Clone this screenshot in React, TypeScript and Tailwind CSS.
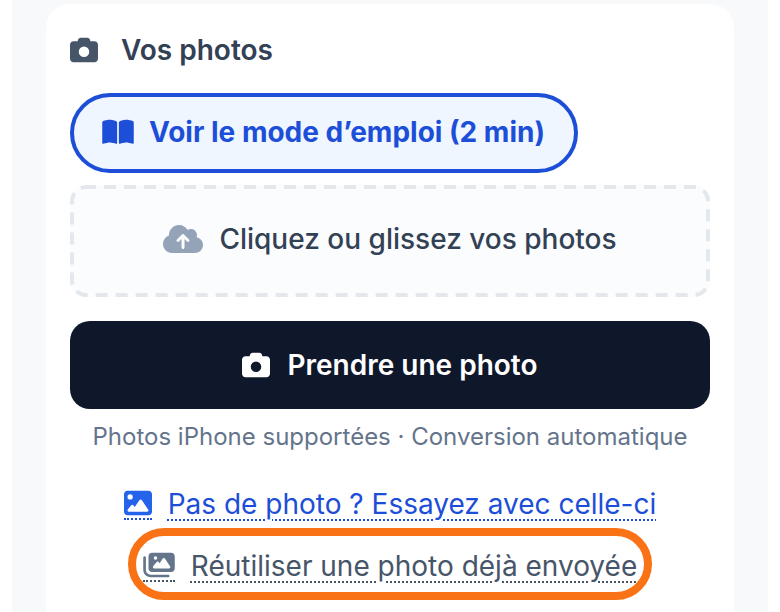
import { FaBookOpen, FaCamera, FaCloudArrowUp, FaImage, FaImages } from 'react-icons/fa6'

export default function App() {
  return (
    <div className="h-[612px] w-[780px] overflow-hidden bg-white font-['Inter',sans-serif]">
      <div className="mx-3 h-full bg-[#f8f9fb] px-[34px] pt-1">
        <div className="h-[640px] rounded-t-[24px] bg-white px-6 pt-[24px]">
          {/* Section title */}
          <div className="flex h-[44px] items-center gap-[24px] text-[#334155]">
            <FaCamera className="h-[28px] w-[28px] text-[#475569]" />
            <h2 className="-ml-px text-[28px] font-semibold leading-none">Vos photos</h2>
          </div>

          <button className="mt-[21px] flex h-[80px] items-center gap-[16px] rounded-full border-4 border-[#1d4ed8] bg-[#eff6ff] pb-[2px] pl-[28px] pr-[29px] text-[28px] font-bold text-[#1d4ed8]">
            <FaBookOpen className="h-[28px] w-[32px] text-[#1d4ed8]" />
            <span className="-ml-px">Voir le mode d’emploi (2 min)</span>
          </button>

          {/* Drop zone, dashes drawn so they keep the reference's 12/8 rhythm */}
          <div className="relative mt-[12px] flex h-[112px] items-center justify-center gap-[16px] rounded-[16px] bg-[#fafcfe] pb-[4px] text-[28px] font-medium text-[#334155]">
            <svg className="absolute inset-0 h-full w-full" viewBox="0 0 640 112" fill="none">
              <rect x="2" y="2" width="636" height="108" rx="14" stroke="#e4e8ec" strokeWidth="4" strokeDasharray="12 8" strokeDashoffset="2" />
            </svg>
            <FaCloudArrowUp className="h-[32px] w-[40px] text-[#94a3b8]" />
            <span>Cliquez ou glissez vos photos</span>
          </div>

          <button className="mt-[24px] flex h-[88px] w-full items-center justify-center gap-[17px] rounded-[20px] bg-[#0f172a] text-[28px] font-semibold text-white">
            <FaCamera className="h-[28px] w-[28px]" />
            <span>Prendre une photo</span>
          </button>

          <p className="mt-[14px] text-center text-[24px] leading-[28px] text-[#64748b]">
            Photos iPhone supportées · Conversion automatique
          </p>

          <div className="mt-[34px] flex flex-col items-center">
            <a className="text-[28px] leading-[38px] text-[#1d4ed8] underline decoration-dotted decoration-2 underline-offset-[5px]">
              <span className="mr-[16px] inline-block border-b-2 border-dotted border-[#1d4ed8] pb-[1px] align-[-6px]">
                <FaImage className="h-[28px] w-[28px] text-[#2563eb]" />
              </span>
              Pas de photo ? Essayez avec celle-ci
            </a>
            <div className="mt-[5px] flex h-[72px] items-center rounded-full border-[8px] border-[#f97316] px-[7px] pt-[4px]">
              <a className="text-[28px] leading-[38px] text-[#475569] underline decoration-dotted decoration-2 underline-offset-[5px]">
                <span className="mr-[16px] inline-block border-b-2 border-dotted border-[#475569] pb-[1px] align-[-6px]">
                  <FaImages className="h-[28px] w-[32px] text-[#64748b]" />
                </span>
                Réutiliser une photo déjà envoyée
              </a>
            </div>
          </div>
        </div>
      </div>
    </div>
  )
}
